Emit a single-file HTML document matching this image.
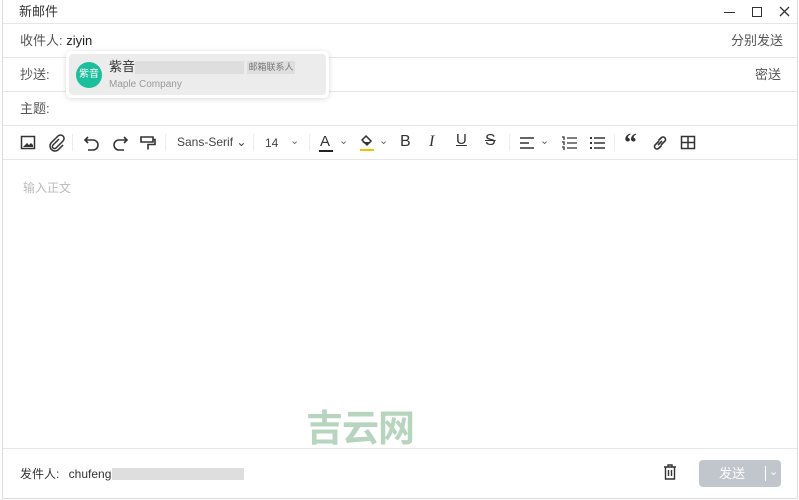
<!DOCTYPE html>
<html><head><meta charset="utf-8"><style>
*{margin:0;padding:0;box-sizing:border-box}
body{width:799px;height:500px;background:#fff;font-family:"Liberation Sans","Noto Sans CJK SC",sans-serif;color:#333;position:relative;overflow:hidden}
.abs{position:absolute}
.frame{left:2px;top:0;width:796px;height:499px;border:1px solid #dcdcdc;border-top:none}
.line{position:absolute;left:3px;right:2px;height:1px;background:#e6e6e6}
.lbl{font-size:13px;color:#555;line-height:16px}
.tb{position:absolute;top:133px;height:20px}
svg{display:block}
.sep{position:absolute;top:134px;width:1px;height:17px;background:#ececec}
</style></head><body>
<div class="abs frame"></div>
<div class="abs lbl" style="left:19px;top:4px;color:#333">新邮件</div>
<div class="abs" style="left:724px;top:12px;width:11px;height:1.3px;background:#333"></div>
<div class="abs" style="left:752px;top:7px;width:10px;height:10px;border:1.3px solid #333"></div>
<svg class="abs" style="left:779px;top:6px" width="11" height="11" viewBox="0 0 11 11"><path d="M1 1l9 9M10 1l-9 9" stroke="#333" stroke-width="1.3"/></svg>
<div class="line" style="top:23px"></div>
<div class="abs lbl" style="left:20px;top:33px">收件人: <span style="color:#222">ziyin</span></div>
<div class="abs lbl" style="left:731px;top:33px">分别发送</div>
<div class="line" style="top:57px"></div>
<div class="abs lbl" style="left:20px;top:67px">抄送:</div>
<div class="abs lbl" style="left:755px;top:67px">密送</div>
<div class="line" style="top:91px"></div>
<div class="abs lbl" style="left:20px;top:101px">主题:</div>
<div class="line" style="top:125px"></div>
<div class="line" style="top:159px"></div>
<div class="abs" style="left:66px;top:51px;width:263px;height:47px;background:#fff;border-radius:5px;box-shadow:0 1px 6px rgba(0,0,0,.15)">
 <div class="abs" style="left:3px;top:3px;width:257px;height:41px;background:#ececec;border-radius:4px"></div>
 <div class="abs" style="left:10px;top:11px;width:26px;height:26px;border-radius:50%;background:#1cbf9b;color:#fff;font-size:10px;line-height:26px;text-align:center">紫音</div>
 <div class="abs" style="left:43px;top:8px;font-size:13px;color:#333;line-height:16px">紫音</div>
 <div class="abs" style="left:69px;top:10px;width:109px;height:13px;background:#dedede"></div>
 <div class="abs" style="left:181px;top:10px;width:48px;height:13px;background:#dedede;font-size:9px;color:#777;text-align:center;line-height:13px">邮箱联系人</div>
 <div class="abs" style="left:43px;top:28px;font-size:10px;color:#999">Maple Company</div>
</div>
<svg class="tb" style="left:20px" width="16" height="20" viewBox="0 0 16 20"><rect x="1.5" y="3.5" width="13" height="12" fill="none" stroke="#333" stroke-width="1.5"/><path d="M3 14l4-4 2 2 2-2 2 2v2z" fill="#333"/></svg>
<svg class="tb" style="left:47px" width="18" height="20" viewBox="0 0 18 20"><path d="M12 6l-6 6a2 2 0 003 3l7-7a3.5 3.5 0 00-5-5l-7 7a5 5 0 007 7l5-5" fill="none" stroke="#333" stroke-width="1.5"/></svg>
<div class="sep" style="left:72px"></div>
<svg class="tb" style="left:83px" width="18" height="20" viewBox="0 0 18 20"><path d="M5 4L2 7l3 3M2 7h8a5 5 0 010 10H5" fill="none" stroke="#333" stroke-width="1.6"/></svg>
<svg class="tb" style="left:111px" width="18" height="20" viewBox="0 0 18 20"><path d="M13 4l3 3-3 3M16 7H8a5 5 0 000 10h5" fill="none" stroke="#333" stroke-width="1.6"/></svg>
<svg class="tb" style="left:139px" width="18" height="20" viewBox="0 0 18 20"><path d="M2 4h12v5H2zM14 6.5h2v5H9v5" fill="none" stroke="#333" stroke-width="1.6"/></svg>
<div class="sep" style="left:165px"></div>
<div class="abs" style="left:177px;top:135px;font-size:12px;color:#444">Sans-Serif ⌄</div>
<div class="sep" style="left:253px"></div>
<div class="abs" style="left:265px;top:136px;font-size:12px;color:#444">14</div>
<div class="abs" style="left:290px;top:134px;font-size:11px;color:#666">⌄</div>
<div class="sep" style="left:309px"></div>
<div class="abs" style="left:320px;top:133px;font-size:15px;color:#333">A</div>
<div class="abs" style="left:319px;top:150px;width:14px;height:2px;background:#222"></div>
<div class="abs" style="left:339px;top:134px;font-size:11px;color:#666">⌄</div>
<svg class="tb" style="left:359px" width="16" height="20" viewBox="0 0 16 20"><path d="M7 3l5 5-4 4-5-5z" fill="none" stroke="#333" stroke-width="1.5"/><path d="M3 9h9l-4 3z" fill="#333"/><rect x="1" y="16" width="14" height="2" fill="#f5c000"/></svg>
<div class="abs" style="left:379px;top:134px;font-size:11px;color:#666">⌄</div>
<div class="abs" style="left:400px;top:133px;font-size:16px;color:#333">B</div>
<div class="abs" style="left:429px;top:133px;font-size:16px;color:#333;font-family:'Liberation Serif',serif;font-style:italic">I</div>
<div class="abs" style="left:456px;top:131px;font-size:15px;color:#333;text-decoration:underline">U</div>
<div class="abs" style="left:485px;top:132px;font-size:16px;color:#333;text-decoration:line-through">S</div>
<div class="sep" style="left:509px"></div>
<svg class="tb" style="left:519px" width="16" height="20" viewBox="0 0 16 20"><path d="M1 5h14M1 10h9M1 15h14" stroke="#333" stroke-width="1.5"/></svg>
<div class="abs" style="left:540px;top:134px;font-size:11px;color:#666">⌄</div>
<svg class="tb" style="left:561px" width="16" height="20" viewBox="0 0 16 20"><path d="M6 5h10M6 10h10M6 15h10M1 4h2v3M1 9h2v3M1 14h2v3" stroke="#333" stroke-width="1.3" fill="none"/></svg>
<svg class="tb" style="left:589px" width="16" height="20" viewBox="0 0 16 20"><path d="M5 5h11M5 10h11M5 15h11" stroke="#333" stroke-width="1.5"/><path d="M1 4h2v2H1zM1 9h2v2H1zM1 14h2v2H1z" fill="#333"/></svg>
<div class="sep" style="left:614px"></div>
<div class="abs" style="left:624px;top:128px;font-size:26px;font-weight:bold;color:#333;font-family:'Liberation Serif',serif">“</div>
<svg class="tb" style="left:652px" width="16" height="20" viewBox="0 0 16 20"><path d="M7 8l-4 4a2.5 2.5 0 003.5 3.5l3-3M9 12l4-4a2.5 2.5 0 00-3.5-3.5l-3 3M6 12l4-4" fill="none" stroke="#333" stroke-width="1.6"/></svg>
<svg class="tb" style="left:680px" width="16" height="20" viewBox="0 0 16 20"><rect x="1.5" y="3.5" width="13" height="12" fill="none" stroke="#333" stroke-width="1.5"/><path d="M8 3.5v12M1.5 9.5h13" stroke="#333" stroke-width="1.5"/></svg>
<div class="abs" style="left:23px;top:179px;font-size:12px;color:#bbb">输入正文</div>
<div class="abs" style="left:306px;top:409px;font-size:37px;line-height:40px;font-weight:bold;color:#b7d4bf;letter-spacing:-1px">吉云网</div>
<div class="line" style="top:448px"></div>
<div class="abs lbl" style="left:20px;top:466px;font-size:12px;color:#333">发件人: <span style="margin-left:6px">chufeng</span></div>
<div class="abs" style="left:112px;top:468px;width:132px;height:12px;background:#dedede"></div>
<svg class="abs" style="left:663px;top:464px" width="14" height="16" viewBox="0 0 14 16"><path d="M1 3h12M5 3V1h4v2M2.5 3v12h9V3M5.5 6v6M8.5 6v6" fill="none" stroke="#333" stroke-width="1.4"/></svg>
<div class="abs" style="left:699px;top:460px;width:82px;height:27px;background:#c1c5cc;border-radius:4px;color:#fff;font-size:13px;line-height:27px;padding-left:20px">发送<span style="position:absolute;left:66px;top:6px;width:1px;height:15px;background:#fff"></span><span style="position:absolute;left:70px;top:-1px;font-size:11px">⌄</span></div>
</body></html>
